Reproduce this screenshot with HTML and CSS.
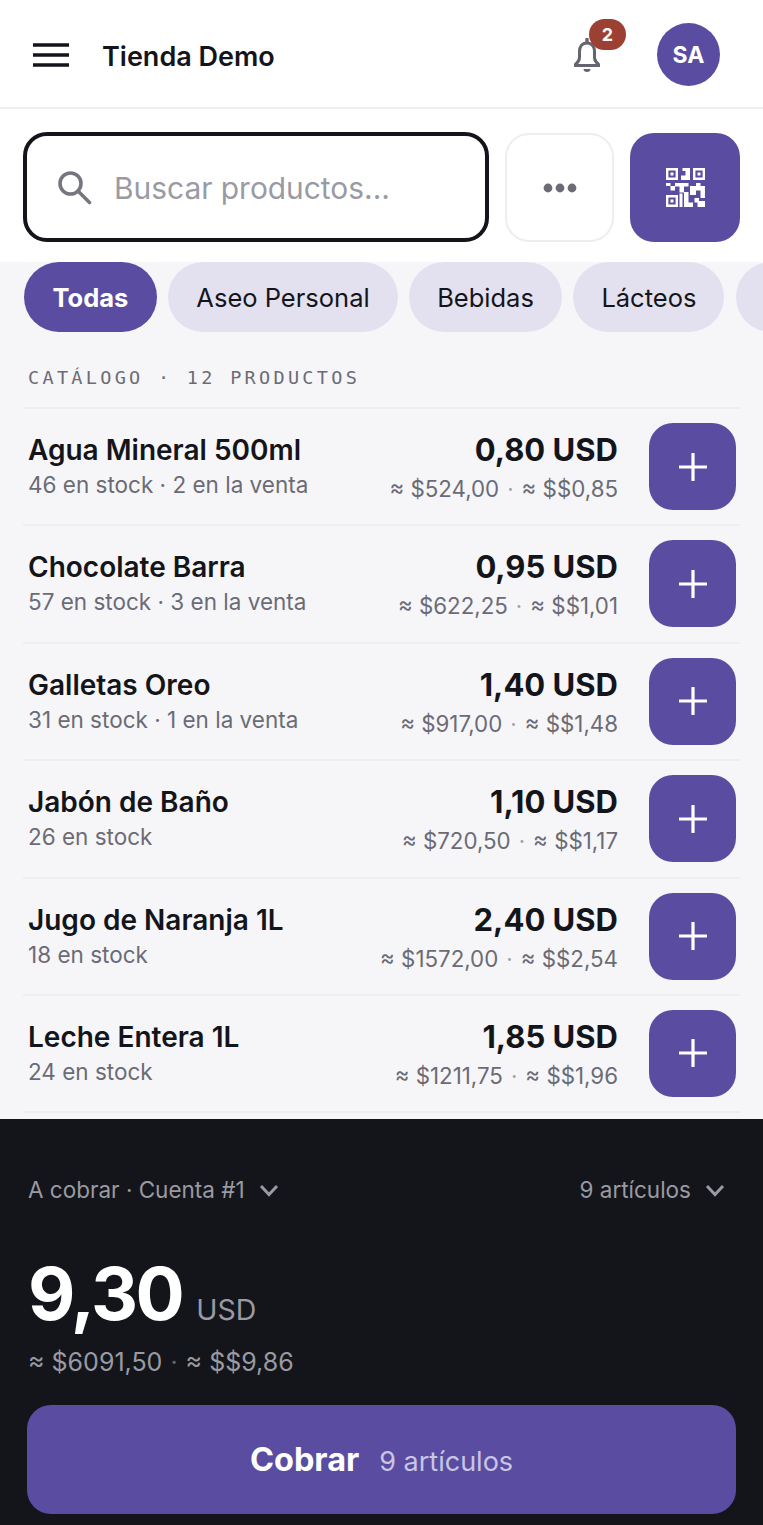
FILE: index.html

```html
<!DOCTYPE html>
<html lang="es">
<head>
  <meta charset="UTF-8">
  <meta name="viewport" content="width=device-width, initial-scale=1">
  <title>Tienda Demo</title>
  <link rel="stylesheet" href="styles.css">
</head>
<body>

  <div class="app">
    <header class="topbar">
      <button class="menu-btn" aria-label="Menú">
        <svg width="36" height="24" viewBox="0 0 36 24"><path d="M0 2h36M0 12h36M0 22h36" stroke="#14151a" stroke-width="3.4" fill="none"/></svg>
      </button>
      <div class="shop-name">Tienda Demo</div>
      <div class="bell">
        <svg width="32" height="36" viewBox="0 0 32 36"><path d="M16 5c-5 0-7.500 3.800-7.500 8.500v6c0 2.800-1.500 4.800-4 7v1h23v-1c-2.500-2.200-4-4.200-4-7v-6C23.500 8.800 21 5 16 5z" fill="none" stroke="#65656f" stroke-width="3"/><path d="M16 1.500v3" stroke="#65656f" stroke-width="3.400" stroke-linecap="round"/><path d="M12.500 31h7c0 1.800-1.500 3-3.500 3s-3.500-1.200-3.500-3z" fill="#65656f"/></svg>
        <span class="badge">2</span>
      </div>
      <div class="avatar">SA</div>
    </header>

    <section class="search-row">
      <div class="search-box">
        <svg width="36" height="36" viewBox="0 0 36 36"><circle cx="14.500" cy="14.500" r="10.500" fill="none" stroke="#76767f" stroke-width="3.600"/><path d="M22 22l11.500 11.500" stroke="#76767f" stroke-width="3.600" stroke-linecap="round"/></svg>
        <span class="placeholder">Buscar productos...</span>
      </div>
      <button class="more-btn" aria-label="Más">
        <svg width="34" height="10" viewBox="0 0 34 10"><circle cx="5" cy="5" r="4.400" fill="#6b6b75"/><circle cx="17" cy="5" r="4.400" fill="#6b6b75"/><circle cx="29" cy="5" r="4.400" fill="#6b6b75"/></svg>
      </button>
      <button class="qr-btn" aria-label="Escanear">
        <svg width="39" height="39" viewBox="0 0 13 13" fill="#fff">
          <path fill-rule="evenodd" d="M0 0h4v4H0zM.8.800v2.400h2.400V.800z"/>
          <path fill-rule="evenodd" d="M9 0h4v4H9zM9.800.800v2.400h2.400V.800z"/>
          <path fill-rule="evenodd" d="M0 9h4v4H0zM.8 9.800v2.400h2.400V9.800z"/>
          <path d="M1.500 1.500h1v1h-1zM10.500 1.500h1v1h-1zM1.500 10.500h1v1h-1z"/>
          <path d="M5.500 0H8v4H5V2.500h1.500V1h-1zM0 5h1.500v1H3v1.500H1.500V6H0zM3 5h4.500v1.200H6v2H4.500v-2H3zM8 6h2V5h1.500v1H13v4h-1.500V7.500H10V9H8zM6 8h1.500v3.500H9V13H6zM4.500 8.500h1V13h-1zM9.500 10H11v1h2v2h-2.500v-1.500h-1z"/>
        </svg>
      </button>
    </section>

    <main class="catalog">
      <nav class="chips">
        <span class="chip active">Todas</span>
        <span class="chip">Aseo Personal</span>
        <span class="chip">Bebidas</span>
        <span class="chip">Lácteos</span>
        <span class="chip chip-next"></span>
      </nav>

      <div class="section-label">CATÁLOGO · 12 PRODUCTOS</div>

      <div class="products">
        <div class="product">
          <div class="info">
            <div class="name">Agua Mineral 500ml</div>
            <div class="stock">46 en stock · 2 en la venta</div>
          </div>
          <div class="prices">
            <div class="price">0,80 USD</div>
            <div class="approx">≈ $524,00<span class="sep">·</span>≈ $$0,85</div>
          </div>
          <button class="add-btn" aria-label="Agregar"><svg width="30" height="30" viewBox="0 0 30 30"><path d="M15 1v28M1 15h28" stroke="#fff" stroke-width="3.200"/></svg></button>
        </div>
        <div class="product">
          <div class="info">
            <div class="name">Chocolate Barra</div>
            <div class="stock">57 en stock · 3 en la venta</div>
          </div>
          <div class="prices">
            <div class="price">0,95 USD</div>
            <div class="approx">≈ $622,25<span class="sep">·</span>≈ $$1,01</div>
          </div>
          <button class="add-btn" aria-label="Agregar"><svg width="30" height="30" viewBox="0 0 30 30"><path d="M15 1v28M1 15h28" stroke="#fff" stroke-width="3.200"/></svg></button>
        </div>
        <div class="product">
          <div class="info">
            <div class="name">Galletas Oreo</div>
            <div class="stock">31 en stock · 1 en la venta</div>
          </div>
          <div class="prices">
            <div class="price">1,40 USD</div>
            <div class="approx">≈ $917,00<span class="sep">·</span>≈ $$1,48</div>
          </div>
          <button class="add-btn" aria-label="Agregar"><svg width="30" height="30" viewBox="0 0 30 30"><path d="M15 1v28M1 15h28" stroke="#fff" stroke-width="3.200"/></svg></button>
        </div>
        <div class="product">
          <div class="info">
            <div class="name">Jabón de Baño</div>
            <div class="stock">26 en stock</div>
          </div>
          <div class="prices">
            <div class="price">1,10 USD</div>
            <div class="approx">≈ $720,50<span class="sep">·</span>≈ $$1,17</div>
          </div>
          <button class="add-btn" aria-label="Agregar"><svg width="30" height="30" viewBox="0 0 30 30"><path d="M15 1v28M1 15h28" stroke="#fff" stroke-width="3.200"/></svg></button>
        </div>
        <div class="product">
          <div class="info">
            <div class="name">Jugo de Naranja 1L</div>
            <div class="stock">18 en stock</div>
          </div>
          <div class="prices">
            <div class="price">2,40 USD</div>
            <div class="approx">≈ $1572,00<span class="sep">·</span>≈ $$2,54</div>
          </div>
          <button class="add-btn" aria-label="Agregar"><svg width="30" height="30" viewBox="0 0 30 30"><path d="M15 1v28M1 15h28" stroke="#fff" stroke-width="3.200"/></svg></button>
        </div>
        <div class="product">
          <div class="info">
            <div class="name">Leche Entera 1L</div>
            <div class="stock">24 en stock</div>
          </div>
          <div class="prices">
            <div class="price">1,85 USD</div>
            <div class="approx">≈ $1211,75<span class="sep">·</span>≈ $$1,96</div>
          </div>
          <button class="add-btn" aria-label="Agregar"><svg width="30" height="30" viewBox="0 0 30 30"><path d="M15 1v28M1 15h28" stroke="#fff" stroke-width="3.200"/></svg></button>
        </div>
      </div>
    </main>

    <footer class="checkout">
      <div class="checkout-top">
        <div class="toggle">A cobrar · Cuenta #1
          <svg width="20" height="13" viewBox="0 0 20 13"><path d="M2 2l8 8.500L18 2" fill="none" stroke="#9a9aa3" stroke-width="3"/></svg>
        </div>
        <div class="toggle">9 artículos
          <svg width="20" height="13" viewBox="0 0 20 13"><path d="M2 2l8 8.500L18 2" fill="none" stroke="#9a9aa3" stroke-width="3"/></svg>
        </div>
      </div>
      <div class="total"><span class="amount">9,30</span><span class="currency">USD</span></div>
      <div class="total-approx">≈ $6091,50<span class="sep">·</span>≈ $$9,86</div>
      <button class="pay-btn"><strong>Cobrar</strong><span>9 artículos</span></button>
    </footer>
  </div>

</body>
</html>
```

FILE: styles.css

```css
* {
  box-sizing: border-box;
}
body {
  margin: 0;
  font-family: Inter, "Liberation Sans", sans-serif;
  color: #14151a;
  background: #f6f6f9;
}
button {
  border: none;
  padding: 0;
  font-family: inherit;
  display: flex;
  align-items: center;
  justify-content: center;
}
.app {
  height: 1525px;
  display: flex;
  flex-direction: column;
  overflow: hidden;
}

.topbar {
  height: 109px;
  flex: none;
  background: #fff;
  border-bottom: 2px solid #eeeef0;
  display: flex;
  align-items: center;
  padding: 2px 43px 0 33px;
}
.menu-btn {
  background: none;
}
.shop-name {
  margin: 4px 0 0 33px;
  font-size: 27px;
  font-weight: 600;
  flex: 1;
}
.bell {
  position: relative;
  width: 32px;
  height: 36px;
  margin: 2px 54px 0 0;
}
.badge {
  position: absolute;
  left: 18px;
  top: -19px;
  width: 37px;
  height: 31px;
  border-radius: 16px;
  background: #9c4034;
  color: #fff;
  font-size: 18px;
  font-weight: 700;
  display: flex;
  align-items: center;
  justify-content: center;
}
.avatar {
  width: 63px;
  height: 63px;
  border-radius: 50%;
  background: #5a4da1;
  color: #fff;
  font-size: 23px;
  font-weight: 700;
  display: flex;
  align-items: center;
  justify-content: center;
}

.search-row {
  height: 153px;
  flex: none;
  background: #fff;
  display: flex;
  gap: 16px;
  padding: 23px 23px 20px 23px;
}
.search-box {
  width: 466px;
  height: 110px;
  border: 4px solid #14151a;
  border-radius: 24px;
  display: flex;
  align-items: center;
  gap: 22px;
  padding-left: 29px;
}
.placeholder {
  margin-top: 2px;
  font-size: 29.900px;
  color: #9a9aa3;
}
.more-btn,
.qr-btn {
  width: 109px;
  height: 109px;
  margin-top: 1px;
  border-radius: 24px;
}
.more-btn {
  background: #fff;
  border: 2px solid #eeeef0;
}
.qr-btn {
  background: #5a4da1;
  width: 110px;
}

.catalog {
  flex: 1;
  min-height: 0;
  overflow: hidden;
}
.chips {
  display: flex;
  gap: 11.500px;
  padding-left: 24px;
  overflow: hidden;
}
.chip {
  flex: none;
  height: 70px;
  padding: 0 28px;
  border-radius: 36px;
  background: #e3e1f0;
  font-size: 25.500px;
  display: flex;
  align-items: center;
}
.chip.active {
  background: #5a4da1;
  color: #fff;
  font-weight: 700;
  padding: 0 28.500px;
}
.chip-next {
  width: 100px;
}
.section-label {
  margin: 35px 0 0 28px;
  height: 40px;
  font-family: "DejaVu Sans Mono", monospace;
  font-size: 18.500px;
  letter-spacing: 3.300px;
  color: #6b6b75;
}

.products {
  margin: 0 23px;
  border-bottom: 2px solid #eeeef0;
}
.product {
  height: 117.400px;
  border-top: 2px solid #eeeef0;
  display: flex;
  align-items: flex-start;
  padding-top: 14px;
}
.info {
  flex: 1;
  padding: 11px 0 0 5px;
}
.name {
  font-size: 28px;
  font-weight: 600;
  line-height: 33px;
}
.stock {
  margin-top: 3px;
  font-size: 22.500px;
  line-height: 30px;
  color: #6b6b75;
}
.prices {
  text-align: right;
  margin-right: 31px;
  padding-top: 9px;
}
.price {
  font-size: 31px;
  font-weight: 700;
  line-height: 36px;
}
.approx {
  margin-top: 6px;
  font-size: 22.300px;
  line-height: 30px;
  color: #6b6b75;
}
.sep {
  margin: 0 8px;
  opacity: 0.6;
}
.add-btn {
  width: 87px;
  height: 87px;
  margin-right: 4px;
  border-radius: 24px;
  background: #5a4da1;
  flex: none;
}

.checkout {
  height: 406px;
  flex: none;
  background: #14151a;
  padding: 55px 27px 0 27px;
}
.checkout-top {
  display: flex;
  justify-content: space-between;
  padding: 0 11px 0 1px;
}
.toggle {
  display: flex;
  align-items: center;
  gap: 14px;
  font-size: 22.500px;
  line-height: 32px;
  color: #9a9aa3;
}
.total {
  margin: 45px 0 0 1px;
  display: flex;
  align-items: baseline;
  gap: 14px;
  line-height: 86px;
}
.amount {
  font-size: 73px;
  font-weight: 700;
  color: #fff;
  letter-spacing: -2.500px;
}
.currency {
  font-size: 28.500px;
  color: #9a9aa3;
}
.total-approx {
  margin: -8px 0 0 1px;
  font-size: 25px;
  line-height: 34px;
  color: #9a9aa3;
}
.pay-btn {
  margin-top: 26px;
  width: 709px;
  height: 109px;
  border-radius: 24px;
  background: #5a4da1;
  gap: 20px;
  align-items: baseline;
  padding-top: 35px;
}
.pay-btn strong {
  font-size: 32.500px;
  font-weight: 700;
  color: #fff;
}
.pay-btn span {
  font-size: 27px;
  color: #c9c5e2;
}
```
